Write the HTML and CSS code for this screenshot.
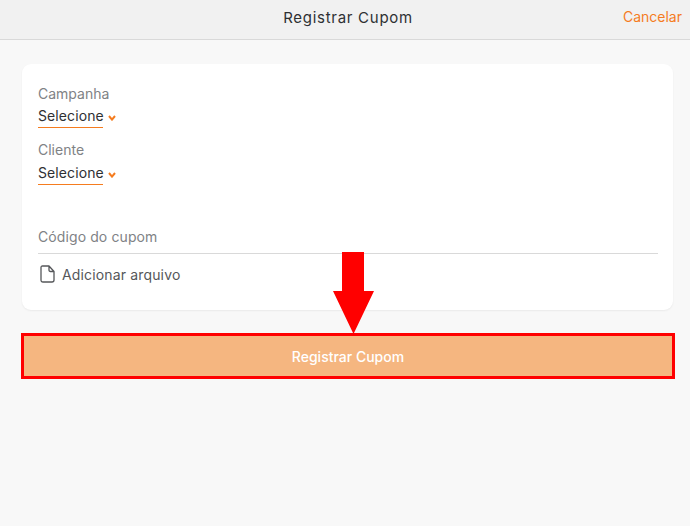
FILE: index.html
```html
<!DOCTYPE html>
<html lang="pt-BR">
<head>
    <meta charset="UTF-8">
    <title>Registrar Cupom</title>
    <link rel="stylesheet" href="styles.css">
</head>
<body>
    <header class="topbar">
        <h1 class="topbar-title">Registrar Cupom</h1>
        <a class="topbar-cancel">Cancelar</a>
    </header>
    <main class="content">
        <section class="card">
            <div class="field">
                <div class="field-label">Campanha</div>
                <div class="select">
                    <span class="select-value">Selecione</span>
                    <svg class="select-arrow" viewBox="0 0 8 6" width="8" height="6"><path d="M1 1 L4 4.6 L7 1" fill="none" stroke="#f57c1f" stroke-width="2"/></svg>
                </div>
            </div>
            <div class="field">
                <div class="field-label">Cliente</div>
                <div class="select">
                    <span class="select-value">Selecione</span>
                    <svg class="select-arrow" viewBox="0 0 8 6" width="8" height="6"><path d="M1 1 L4 4.6 L7 1" fill="none" stroke="#f57c1f" stroke-width="2"/></svg>
                </div>
            </div>
            <div class="coupon">Código do cupom</div>
            <div class="attach">
                <svg class="attach-icon" viewBox="0 0 15 18" width="15" height="18"><path d="M2.5 1 H9 L14 6.5 V15 Q14 17 12 17 H3 Q1 17 1 15 V2.5 Q1 1 2.5 1 Z M9 1 V5 Q9 6.5 10.5 6.5 H14" fill="none" stroke="#55575a" stroke-width="1.3" stroke-linejoin="round"/></svg>
                <span>Adicionar arquivo</span>
            </div>
        </section>
        <button class="submit">Registrar Cupom</button>
    </main>
    <svg class="callout-arrow" viewBox="0 0 41 82" width="41" height="82"><path d="M9 0 H31 V39 H41 L20.5 82 L0 39 H9 Z" fill="#ff0000"/></svg>
</body>
</html>
```

FILE: styles.css
```css
html, body {
    margin: 0;
    height: 100%;
}

body {
    position: relative;
    background: #f8f8f8;
    color: #2e3033;
    font-family: "Inter", "Liberation Sans", sans-serif;
    font-size: 14px;
}

/* barra superior */
.topbar {
    display: flex;
    align-items: center;
    justify-content: center;
    position: relative;
    box-sizing: border-box;
    height: 40px;
    padding: 0 0 4px 6px;
    background: #f1f1f1;
    border-bottom: 1px solid #d9d9d9;
}

.topbar-title {
    margin: 0;
    font-size: 15px;
    font-weight: 400;
    letter-spacing: .72px;
}

.topbar-cancel {
    position: absolute;
    right: 8px;
    top: 8px;
    color: #f57c1f;
    font-size: 14px;
}

/* formulario */
.content {
    padding: 24px 17px 0 22px;
}

.card {
    height: 246px;
    box-sizing: border-box;
    padding: 21px 15px 0 16px;
    background: #fff;
    border-radius: 9px;
    box-shadow: 0 1px 2px rgba(0, 0, 0, .06);
}

.field {
    height: 56px;
}

.field + .field .field-label {
    height: 21px;
}

.field-label {
    height: 20px;
    line-height: 17px;
    color: #808285;
}

.select {
    display: flex;
    align-items: flex-start;
}

.select-value {
    width: 65px;
    height: 22px;
    line-height: 22px;
    letter-spacing: .1px;
    border-bottom: 1px solid #f57c1f;
    white-space: nowrap;
}

.select-arrow {
    margin: 10px 0 0 5px;
}

.coupon {
    margin-top: 25px;
    height: 31px;
    line-height: 29px;
    color: #808285;
    letter-spacing: .1px;
    border-bottom: 1px solid #d9d9d9;
}

.attach {
    display: flex;
    align-items: center;
    gap: 7px;
    margin: 11px 0 0 2px;
    color: #55575a;
    letter-spacing: .15px;
}

.submit {
    display: block;
    width: 654px;
    height: 46px;
    margin: 23px 0 0 -1px;
    border: 3px solid #ff0000;
    background: #f5b680;
    color: #fff;
    font-family: inherit;
    font-size: 14px;
    font-weight: 500;
}

/* seta vermelha sobre a tela */
.callout-arrow {
    position: absolute;
    left: 333px;
    top: 252px;
}
```
